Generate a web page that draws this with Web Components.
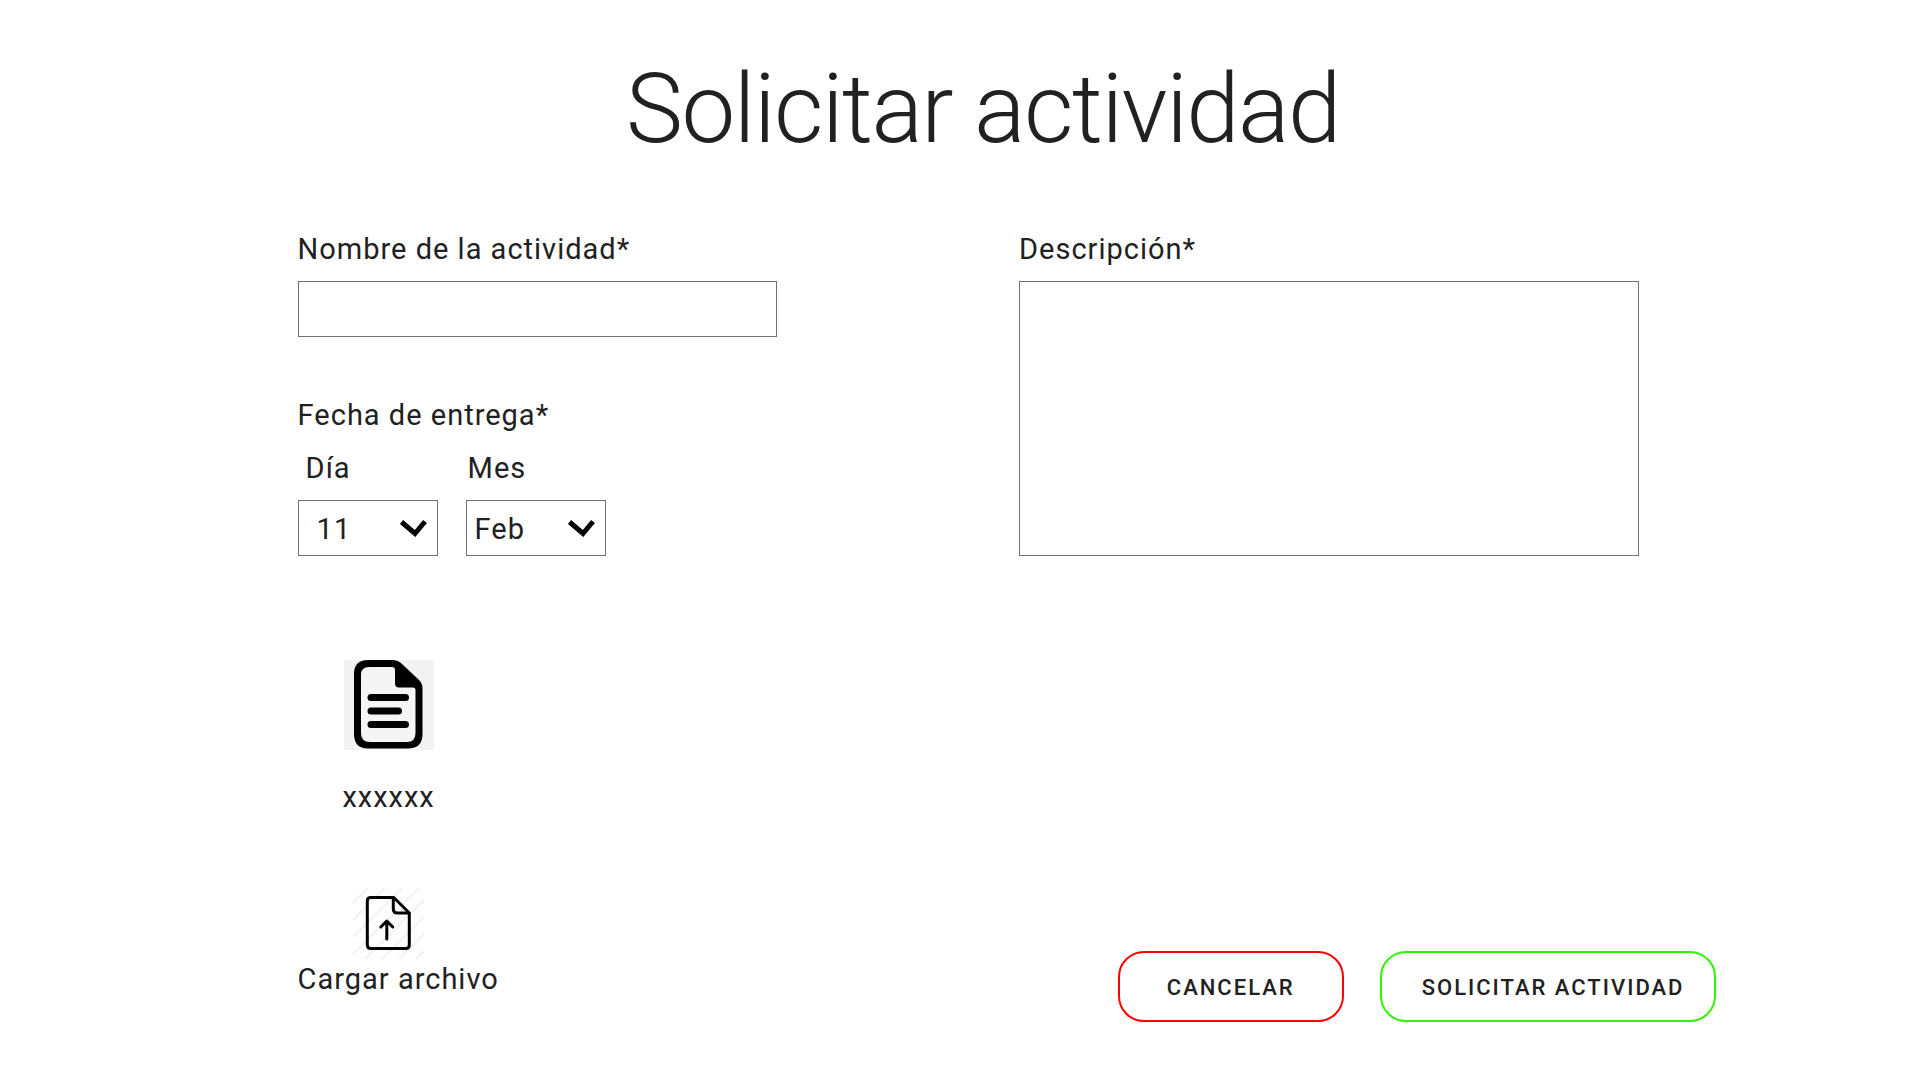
<!DOCTYPE html>
<html lang="es">
<head>
<meta charset="utf-8">
<title>Solicitar actividad</title>
<style>
body{margin:0;background:#fff;color:#212121;font-family:Roboto,"Liberation Sans",sans-serif;font-size:29px;line-height:36px;letter-spacing:1px}
</style>
</head>
<body>
<activity-page></activity-page>
<script>
const define = (name, html, setup) => {
  const template = document.createElement('template');
  template.innerHTML = html;
  customElements.define(name, class extends HTMLElement {
    constructor() {
      super();
      this.attachShadow({mode: 'open'}).append(template.content.cloneNode(true));
    }
    connectedCallback() { if (setup) setup(this, this.shadowRoot); }
  });
};

define('text-field', `
<style>
:host{display:flex;flex-direction:column;gap:14px}
input,textarea{box-sizing:border-box;display:block;width:100%;height:56px;margin:0;padding:8px 16px;border:1px solid #707070;border-radius:0;background:#fff;color:inherit;font:inherit;letter-spacing:inherit;resize:none}
textarea{height:275px}
</style>
<label for="control"></label>`, (host, root) => {
  if (root.querySelector('#control')) return;
  root.querySelector('label').textContent = host.getAttribute('label');
  const control = document.createElement(host.hasAttribute('multiline') ? 'textarea' : 'input');
  control.id = 'control';
  root.append(control);
});

define('select-field', `
<style>
:host{display:flex;flex-direction:column;gap:14px;width:140px}
label{padding-left:var(--label-inset,2px)}
.box{display:grid;align-items:center}
select{grid-area:1/1;box-sizing:border-box;width:100%;height:56px;margin:0;padding:2px 40px 0 var(--value-inset,8px);border:1px solid #707070;border-radius:0;background:#fff;color:inherit;font:inherit;letter-spacing:inherit;appearance:none}
svg{grid-area:1/1;justify-self:end;margin-right:10px;pointer-events:none}
</style>
<label for="control"></label>
<div class="box">
<select id="control"></select>
<svg width="28" height="18" viewBox="0 0 28 18" fill="none" stroke="#000" stroke-width="5"><path d="M1.500 3 15 14.500 25 2.500"/></svg>
</div>`, (host, root) => {
  root.querySelector('label').textContent = host.getAttribute('label');
  root.querySelector('select').replaceChildren(...host.getAttribute('options').split(',').map(o => new Option(o, o, false, o === host.getAttribute('value'))));
});

define('attached-file', `
<style>
:host{display:flex;flex-direction:column;align-items:center;gap:29px;width:90px}
svg{display:block}
</style>
<svg width="90" height="90" viewBox="0 0 90 90">
<rect width="90" height="90" fill="#f2f2f2"/>
<path d="M22 3.500H49L75 27V74Q75 85 64 85H25Q14 85 14 74V12Q14 3.500 22 3.500Z" fill="#f5f5f5"/>
<path fill-rule="evenodd" d="M24 0H48Q54 0 58 4L75 20Q78.500 23.500 78.500 28V74Q78.500 88.500 64 88.500H24Q10 88.500 10 74V14Q10 0 24 0ZM25 7Q17 7 17 15V73Q17 82 26 82H63Q71.500 82 71.500 73V30Q71.500 27.500 69 27.500H55Q51 27.500 51 23.500V10Q51 7 48 7Z"/>
<path d="M27 37.500H61.500M27 51H54.500M27 64.500H61.500" fill="none" stroke="#000" stroke-width="7" stroke-linecap="round"/>
</svg>
<slot></slot>`);

define('upload-button', `
<style>
:host{display:block}
label{display:flex;flex-direction:column;align-items:flex-start;gap:2px;cursor:pointer}
input{position:absolute;width:1px;height:1px;opacity:0}
svg{display:block;margin-left:54px}
</style>
<label>
<svg width="72" height="72" viewBox="0 0 72 72" fill="none">
<defs><pattern id="hatch" width="17" height="17" patternUnits="userSpaceOnUse"><path d="M-4 21 21-4M-4 4 4-4M13 21 21 13" stroke="#f1f1f1" stroke-width="2"/></pattern></defs>
<rect x="1" y="1" width="71" height="71" fill="url(#hatch)"/>
<g stroke="#000" stroke-width="3" stroke-linecap="round" stroke-linejoin="round" transform="translate(.8 0)">
<path d="M18 10.500H41L56.500 26V58Q56.500 61.500 53 61.500H18Q14.500 61.500 14.500 58V14Q14.500 10.500 18 10.500Z"/>
<path d="M40.500 11V22Q40.500 26 44.500 26H56"/>
<path d="M34 52V34M28 40 34 34 40 40"/>
</g>
</svg>
<slot></slot>
<input type="file">
</label>`);

define('action-button', `
<style>
:host{display:block}
button{box-sizing:border-box;height:71px;margin:0;padding:2px var(--pad-end,47px) 0 var(--pad-start,47px);border:2px solid var(--edge,#f00);border-radius:26px;background:#fff;color:inherit;font:500 22px/28px Roboto,"Liberation Sans",sans-serif;letter-spacing:2px;text-transform:uppercase;white-space:nowrap}
</style>
<button type="button"><slot></slot></button>`);

define('activity-page', `
<style>
:host{display:block}
h1{margin:0;padding:53px 0 66px 46px;text-align:center;font-size:96px;line-height:112px;font-weight:300;letter-spacing:-1.500px}
form{display:grid;grid-template-columns:721fr 697fr;padding:0 10.600% 56px 15.500%}
.data,.detail{display:flex;flex-direction:column}
.data{padding-bottom:25px}
.name{width:479px}
fieldset{margin:60px 0 0;padding:0;border:0}
legend{padding:0;margin-bottom:17px}
.date{display:flex;gap:28px}
.day{--label-inset:8px;--value-inset:18px}
.attached{margin:104px 0 72px 46px}
.description{width:620px;max-width:100%}
.actions{display:flex;justify-content:flex-end;gap:36px;margin-top:auto}
.send{--edge:#30f500;--pad-start:40px;--pad-end:30px}
</style>
<h1>Solicitar actividad</h1>
<form>
<div class="data">
<text-field class="name" label="Nombre de la actividad*"></text-field>
<fieldset>
<legend>Fecha de entrega*</legend>
<div class="date">
<select-field class="day" label="Día" options="11" value="11"></select-field>
<select-field label="Mes" options="Feb" value="Feb"></select-field>
</div>
</fieldset>
<attached-file class="attached">xxxxxx</attached-file>
<upload-button>Cargar archivo</upload-button>
</div>
<div class="detail">
<text-field class="description" label="Descripción*" multiline></text-field>
<div class="actions">
<action-button>Cancelar</action-button>
<action-button class="send">Solicitar actividad</action-button>
</div>
</div>
</form>`);
</script>
</body>
</html>
